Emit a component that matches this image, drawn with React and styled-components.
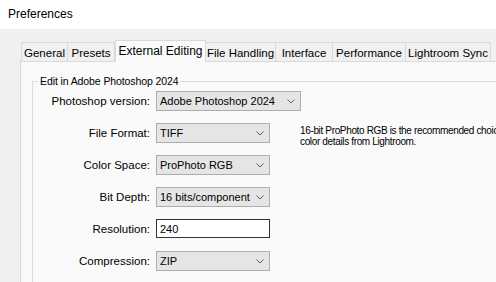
import React from 'react';
import styled, { createGlobalStyle } from 'styled-components';

const GlobalStyle = createGlobalStyle`
    html, body {
        margin: 0;
        padding: 0;
        background: #f0f0f0;
        overflow: hidden;
    }
    body {
        font-family: "Liberation Sans", Arial, sans-serif;
        font-size: 11px;
        color: #000;
    }
`;

const Window = styled.div`
    width: 496px;
    height: 282px;
    display: flex;
    flex-direction: column;
    background: #f0f0f0;
    overflow: hidden;
`;

const TitleBar = styled.div`
    height: 29px;
    background: #fff;
    display: flex;
    align-items: center;
    padding-left: 8px;
    padding-bottom: 1px;
    box-sizing: border-box;
    font-size: 12px;
`;

const Body = styled.div`
    flex: 1;
    padding: 10px 0 0 20px;
    display: flex;
    flex-direction: column;
`;

const TabStrip = styled.div`
    display: flex;
    align-items: flex-end;
    height: 22px;
    padding-left: 1px;
    position: relative;
    z-index: 1;
`;

const Tab = styled.div`
    width: ${p => p.w}px;
    height: ${p => (p.active ? 22 : 19)}px;
    box-sizing: border-box;
    display: flex;
    align-items: center;
    justify-content: center;
    padding-top: ${p => (p.active ? 0 : 1)}px;
    background: ${p => (p.active ? '#fafafa' : '#f0f0f0')};
    border: 1px solid #d9d9d9;
    border-bottom: ${p => (p.active ? '1px solid #fafafa' : 'none')};
    border-left: ${p => (p.first || p.active ? '1px solid #d9d9d9' : 'none')};
    margin-bottom: ${p => (p.active ? -1 : 0)}px;
    white-space: nowrap;
    font-size: ${p => (p.active ? 12 : 11.5)}px;
`;

const Panel = styled.div`
    flex: 1;
    background: #fafafa;
    border-top: 1px solid #d9d9d9;
    border-left: 1px solid #d9d9d9;
    padding: 13px 0 0 11px;
`;

const GroupBox = styled.fieldset`
    margin: 0;
    padding: 4px 0 0 0;
    border: 1px solid #dcdcdc;
    border-right: none;
    border-bottom: none;
    height: 100%;
    box-sizing: border-box;
`;

const Legend = styled.legend`
    font-size: 10.5px;
    letter-spacing: -0.1px;
    padding: 0 2px;
    margin-left: 5px;
    line-height: 12px;
`;

const Rows = styled.div`
    display: flex;
    flex-direction: column;
    gap: 12px;
`;

const Row = styled.div`
    display: flex;
    align-items: flex-start;
    height: 20px;
`;

const Label = styled.label`
    width: 123px;
    flex: none;
    text-align: right;
    padding-right: 6px;
    box-sizing: border-box;
    line-height: 20px;
    font-size: 11.5px;
    white-space: nowrap;
`;

const Select = styled.div`
    width: ${p => p.w}px;
    height: 20px;
    box-sizing: border-box;
    flex: none;
    display: flex;
    align-items: center;
    justify-content: space-between;
    background: #e5e5e5;
    border: 1px solid #adadad;
    padding: 0 5px 0 3px;
    font-size: 11px;
    white-space: nowrap;
`;

const Input = styled.div`
    width: ${p => p.w}px;
    height: 19px;
    box-sizing: border-box;
    flex: none;
    display: flex;
    align-items: center;
    background: #fff;
    border: 1px solid #333;
    padding: 0 3px;
    font-size: 11px;
`;

const Note = styled.p`
    margin: 2px 0 0 30px;
    font-size: 10px;
    letter-spacing: -0.35px;
    line-height: 11px;
    white-space: nowrap;
`;

const Chevron = () => (
    <svg width="8" height="5" viewBox="0 0 8 5">
        <path d="M0.5 0.5 L4 4 L7.5 0.5" fill="none" stroke="#606060" strokeWidth="1" />
    </svg>
);

const tabs = [
    { name: 'General', w: 47 },
    { name: 'Presets', w: 47 },
    { name: 'External Editing', w: 91 },
    { name: 'File Handling', w: 70 },
    { name: 'Interface', w: 57 },
    { name: 'Performance', w: 73 },
    { name: 'Lightroom Sync', w: 85 },
];

const App = () => {
    return (
        <Window>
            <GlobalStyle />
            <TitleBar>Preferences</TitleBar>
            <Body>
                <TabStrip>
                    {tabs.map((t, i) => (
                        <Tab key={t.name} w={t.w} first={i === 0} active={t.name === 'External Editing'}>
                            {t.name}
                        </Tab>
                    ))}
                </TabStrip>
                <Panel>
                    <GroupBox>
                        <Legend>Edit in Adobe Photoshop 2024</Legend>
                        <Rows>
                            <Row>
                                <Label>Photoshop version:</Label>
                                <Select w={145}>Adobe Photoshop 2024<Chevron /></Select>
                            </Row>
                            <Row>
                                <Label>File Format:</Label>
                                <Select w={114}>TIFF<Chevron /></Select>
                                <Note>
                                    16-bit ProPhoto RGB is the recommended choice for best preserving<br />
                                    color details from Lightroom.
                                </Note>
                            </Row>
                            <Row>
                                <Label>Color Space:</Label>
                                <Select w={114}>ProPhoto RGB<Chevron /></Select>
                            </Row>
                            <Row>
                                <Label>Bit Depth:</Label>
                                <Select w={114}>16 bits/component<Chevron /></Select>
                            </Row>
                            <Row>
                                <Label>Resolution:</Label>
                                <Input w={114}>240</Input>
                            </Row>
                            <Row>
                                <Label>Compression:</Label>
                                <Select w={114}>ZIP<Chevron /></Select>
                            </Row>
                        </Rows>
                    </GroupBox>
                </Panel>
            </Body>
        </Window>
    );
};

export default App;
